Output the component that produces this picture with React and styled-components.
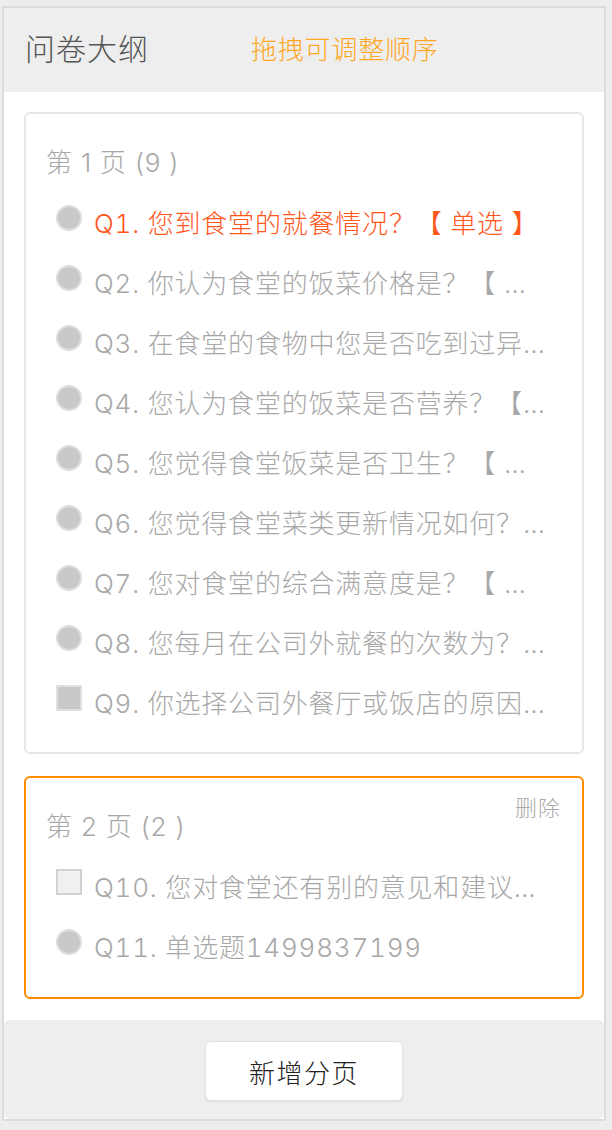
import React from "react";
import styled, { createGlobalStyle } from "styled-components";

const Global = createGlobalStyle`
  html, body { margin: 0; padding: 0; background: #ededed; }
  body { font-family: Inter, "Noto Sans CJK SC", sans-serif; }
  * { box-sizing: border-box; }
`;

const Frame = styled.div`
  width: 604px;
  margin: 6px 0 0 2px;
  border: 2px solid #dcdcdc;
  background: #fff;
  display: flex;
  flex-direction: column;
`;

const Header = styled.div`
  height: 84px;
  background: #eeeeee;
  display: flex;
  align-items: center;
  padding: 0 0 6px 21px;
`;

const Title = styled.div`
  font-size: 30px;
  color: #555;
  letter-spacing: 1px;
  width: 226px;
  font-weight: 300;
`;

const Hint = styled.div`
  font-size: 26px;
  color: #ffa723;
  letter-spacing: 0.8px;
  font-weight: 300;
`;

const Body = styled.div`
  padding: 20px 20px 21px;
  display: flex;
  flex-direction: column;
  gap: 22px;
`;

const Card = styled.div`
  position: relative;
  border: 2px solid ${(p) => (p.$active ? "#ff8c00" : "#e6e6e6")};
  border-radius: 6px;
  padding: 29px 36px ${(p) => (p.$active ? "22px" : "21px")} 20px;
`;

const PageTitle = styled.div`
  height: 40px;
  line-height: 40px;
  margin-bottom: 8px;
  font-size: 26px;
  color: #a8a8a8;
  font-weight: 300;
  letter-spacing: 0.8px;
`;

const Delete = styled.span`
  position: absolute;
  top: 15px;
  right: 21px;
  line-height: 30px;
  font-size: 22px;
  letter-spacing: 1px;
  color: #aaa;
  font-weight: 300;
`;

const Row = styled.div`
  height: 60px;
  display: flex;
  align-items: center;
  padding-left: 10px;
  min-width: 0;
`;

const Radio = styled.span`
  flex: none;
  width: 26px;
  height: 26px;
  border-radius: 50%;
  background: #c9c9c9;
  border: 2px solid #dedede;
  margin: 0 12px 6px 0;
`;

const Check = styled.span`
  flex: none;
  width: 26px;
  height: 26px;
  background: ${(p) => (p.$empty ? "#f0f0f0" : "#c9c9c9")};
  border: 2px solid ${(p) => (p.$empty ? "#d2d2d2" : "#e0e0e0")};
  margin: 0 12px 6px 0;
`;

const QText = styled.span`
  flex: 1;
  min-width: 0;
  font-size: 26px;
  letter-spacing: 0.8px;
  font-weight: 300;
  font-variant-numeric: tabular-nums;
  color: ${(p) => (p.$current ? "#ff561c" : "#a8a8a8")};
  white-space: nowrap;
  overflow: hidden;
  text-overflow: ellipsis;
`;

const Footer = styled.div`
  background: #eeeeee;
  border-radius: 6px;
  padding: 21px 0 18px;
  display: flex;
  justify-content: center;
`;

const AddButton = styled.button`
  width: 198px;
  height: 60px;
  background: #fff;
  border: 1px solid #e2e2e2;
  border-radius: 6px;
  box-shadow: 0 1px 2px rgba(0, 0, 0, 0.08);
  font-family: inherit;
  font-size: 26px;
  color: #222;
  letter-spacing: 1.5px;
  font-weight: 300;
  cursor: pointer;
`;

const pages = [
  {
    title: "第 1 页 (9 )",
    items: [
      { t: "Q1. 您到食堂的就餐情况？【 单选 】", k: "radio", current: true },
      { t: "Q2. 你认为食堂的饭菜价格是？【 单选 】", k: "radio" },
      { t: "Q3. 在食堂的食物中您是否吃到过异物？【 单选 】", k: "radio" },
      { t: "Q4. 您认为食堂的饭菜是否营养？【 单选 】", k: "radio" },
      { t: "Q5. 您觉得食堂饭菜是否卫生？【 单选 】", k: "radio" },
      { t: "Q6. 您觉得食堂菜类更新情况如何？【 单选 】", k: "radio" },
      { t: "Q7. 您对食堂的综合满意度是？【 单选 】", k: "radio" },
      { t: "Q8. 您每月在公司外就餐的次数为？【 单选 】", k: "radio" },
      { t: "Q9. 你选择公司外餐厅或饭店的原因？【 多选 】", k: "check" },
    ],
  },
  {
    title: "第 2 页 (2 )",
    active: true,
    items: [
      { t: "Q10. 您对食堂还有别的意见和建议？【 填空 】", k: "empty" },
      { t: "Q11. 单选题1499837199", k: "radio" },
    ],
  },
];

export default function App() {
  return (
    <>
      <Global />
      <Frame>
        <Header>
          <Title>问卷大纲</Title>
          <Hint>拖拽可调整顺序</Hint>
        </Header>
        <Body>
          {pages.map((p) => (
            <Card key={p.title} $active={p.active}>
              {p.active && <Delete>删除</Delete>}
              <PageTitle>{p.title}</PageTitle>
              {p.items.map((q) => (
                <Row key={q.t}>
                  {q.k === "radio" ? <Radio /> : <Check $empty={q.k === "empty"} />}
                  <QText $current={q.current}>{q.t}</QText>
                </Row>
              ))}
            </Card>
          ))}
        </Body>
        <Footer>
          <AddButton>新增分页</AddButton>
        </Footer>
      </Frame>
    </>
  );
}
